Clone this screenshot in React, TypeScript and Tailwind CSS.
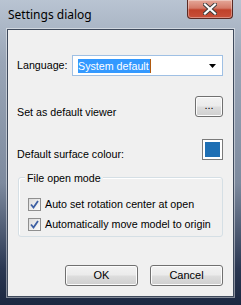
import React from 'react';

const Check = () => (
  <span className="w-[13px] h-[13px] border border-[#8f8f8f] bg-gradient-to-br from-[#dcdcdc] to-[#fbfbfb] flex items-center justify-center shrink-0">
    <svg width="9" height="9" viewBox="0 0 9 9">
      <path d="M1 4.5 L3.5 7.5 L8 1" fill="none" stroke="#3c5fa3" strokeWidth="1.8" />
    </svg>
  </span>
);

const WinButton: React.FC<{ label: string; className?: string }> = ({ label, className }) => (
  <button
    className={`h-[21px] rounded-[3px] border border-[#707070] bg-[linear-gradient(#f2f2f2_0%,#ebebeb_48%,#dddddd_52%,#cfcfcf_100%)] text-[11px] text-black flex items-center justify-center shadow-[inset_0_0_0_1px_#fcfcfc] ${className ?? ''}`}
  >
    {label}
  </button>
);

const App: React.FC = () => {
  return (
    <div
      className="w-[241px] h-[305px] relative overflow-hidden bg-[linear-gradient(180deg,#b9c4d2_0%,#9aa6b7_20%,#7d8a9e_60%,#2a3752_88%,#1b2740_100%)] flex flex-col"
      style={{ fontFamily: '"Liberation Sans", Arial, sans-serif' }}
    >
      {/* Title bar */}
      <div className="h-[29px] flex items-start relative shrink-0">
        <span className="pl-[8px] pt-[6px] text-[12px] text-black" style={{ fontFamily: '"Noto Sans", "Open Sans", sans-serif' }}>
          Settings dialog
        </span>
        <div className="absolute right-[8px] top-0 w-[46px] h-[19px] rounded-b-[4px] border border-t-0 border-[#5a2a24] bg-[linear-gradient(#e5a899_0%,#d47a68_45%,#c0412a_55%,#c8503a_100%)] flex items-center justify-center shadow-[inset_0_0_0_1px_rgba(255,255,255,0.35)]">
          <svg width="14" height="12" viewBox="0 0 14 12">
            <path d="M2 1.5 L12 10.5 M12 1.5 L2 10.5" stroke="#3b3b3b" strokeWidth="4" strokeLinecap="square" />
            <path d="M2 1.5 L12 10.5 M12 1.5 L2 10.5" stroke="#ffffff" strokeWidth="2.2" strokeLinecap="square" />
          </svg>
        </div>
      </div>

      {/* Client area */}
      <div className="mx-[7px] h-[268px] border border-[#3f4a5c] bg-[#f0f0f0] shadow-[0_0_0_1px_rgba(255,255,255,0.45)] flex flex-col text-[10.7px] text-black">
        {/* Language */}
        <div className="flex items-center mt-[25px] pl-[9px] pr-[10px]">
          <span className="w-[55px]">Language:</span>
          <div className="flex-1 h-[21px] bg-white border border-[#9fc0e4] flex items-center pl-[5px] pr-[6px]">
            <span className="bg-[#3399ff] text-white h-[14px] leading-[14px] pr-[1px]">System default</span>
            <span className="w-px h-[14px] bg-[#b05a10]" />
            <span className="flex-1" />
            <svg width="7" height="4" viewBox="0 0 7 4">
              <path d="M0 0 H7 L3.5 4 Z" fill="#000" />
            </svg>
          </div>
        </div>

        {/* Default viewer */}
        <div className="flex items-end justify-between mt-[20px] pl-[9px] pr-[10px]">
          <span className="mb-[-3px]">Set as default viewer</span>
          <WinButton label="..." className="w-[28px] h-[20px] leading-[10px] pb-[4px]" />
        </div>

        {/* Surface colour */}
        <div className="flex items-end justify-between mt-[22px] pl-[9px] pr-[10px]">
          <span className="mb-[-2px]">Default surface colour:</span>
          <div className="w-[21px] h-[21px] border border-[#7a7a7a] bg-white p-[2px]">
            <div className="w-full h-full bg-[#1e6fb4]" />
          </div>
        </div>

        {/* Group box */}
        <div className="relative mt-[17px] ml-[10px] mr-[10px] h-[60px] border border-[#d5dfe5] rounded-[3px] shadow-[inset_1px_1px_0_#fff]">
          <span className="absolute left-[6px] top-[-8px] bg-[#f0f0f0] px-[2px]">File open mode</span>
          <div className="flex flex-col gap-[7px] pt-[20px] pl-[9px] leading-[13px]">
            <label className="flex items-center gap-[4px]">
              <Check />
              <span>Auto set rotation center at open</span>
            </label>
            <label className="flex items-center gap-[4px]">
              <Check />
              <span>Automatically move model to origin</span>
            </label>
          </div>
        </div>

        {/* Buttons */}
        <div className="flex justify-end gap-[12px] mt-[28px] pr-[10px]">
          <WinButton label="OK" className="w-[73px]" />
          <WinButton label="Cancel" className="w-[73px]" />
        </div>
      </div>
    </div>
  );
};

export default App;
